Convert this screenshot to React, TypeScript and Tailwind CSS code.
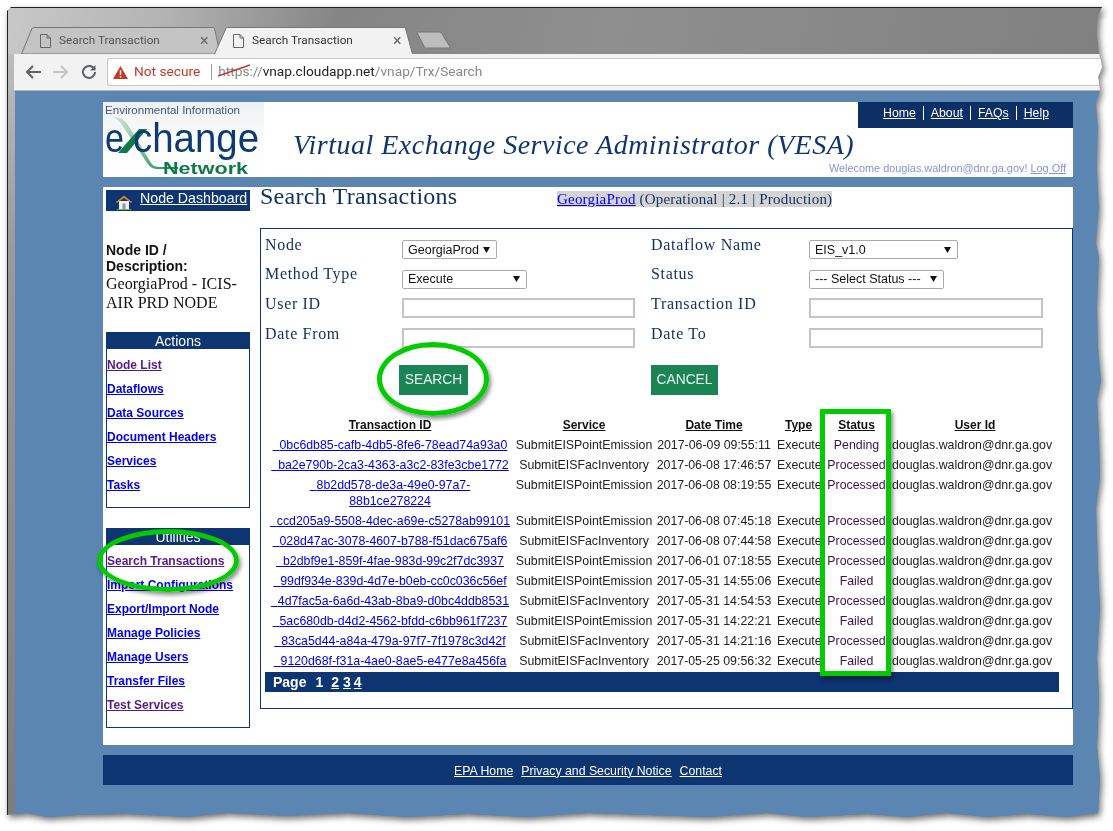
const serif = "font-['Liberation_Serif',serif]";
const sans = "font-['Liberation_Sans',Arial,sans-serif]";

type Row = { id: string[]; service: string; date: string; status: string };
const rows: Row[] = [
  { id: ["0bc6db85-cafb-4db5-8fe6-78ead74a93a0"], service: "SubmitEISPointEmission", date: "2017-06-09 09:55:11", status: "Pending" },
  { id: ["ba2e790b-2ca3-4363-a3c2-83fe3cbe1772"], service: "SubmitEISFacInventory", date: "2017-06-08 17:46:57", status: "Processed" },
  { id: ["8b2dd578-de3a-49e0-97a7-", "88b1ce278224"], service: "SubmitEISPointEmission", date: "2017-06-08 08:19:55", status: "Processed" },
  { id: ["ccd205a9-5508-4dec-a69e-c5278ab99101"], service: "SubmitEISPointEmission", date: "2017-06-08 07:45:18", status: "Processed" },
  { id: ["028d47ac-3078-4607-b788-f51dac675af6"], service: "SubmitEISFacInventory", date: "2017-06-08 07:44:58", status: "Processed" },
  { id: ["b2dbf9e1-859f-4fae-983d-99c2f7dc3937"], service: "SubmitEISPointEmission", date: "2017-06-01 07:18:55", status: "Processed" },
  { id: ["99df934e-839d-4d7e-b0eb-cc0c036c56ef"], service: "SubmitEISPointEmission", date: "2017-05-31 14:55:06", status: "Failed" },
  { id: ["4d7fac5a-6a6d-43ab-8ba9-d0bc4ddb8531"], service: "SubmitEISFacInventory", date: "2017-05-31 14:54:53", status: "Processed" },
  { id: ["5ac680db-d4d2-4562-bfdd-c6bb961f7237"], service: "SubmitEISPointEmission", date: "2017-05-31 14:22:21", status: "Failed" },
  { id: ["83ca5d44-a84a-479a-97f7-7f1978c3d42f"], service: "SubmitEISFacInventory", date: "2017-05-31 14:21:16", status: "Processed" },
  { id: ["9120d68f-f31a-4ae0-8ae5-e477e8a456fa"], service: "SubmitEISFacInventory", date: "2017-05-25 09:56:32", status: "Failed" },
];

function DocIcon() {
  return (
    <svg width="11" height="14" viewBox="0 0 11 14" fill="none" stroke="#666" strokeWidth="1">
      <path d="M.5.5h6.500l3.500 3.500v9.500h-10zM7 .5v3.500h3.500" />
    </svg>
  );
}

function Tab({ active, shape }: { active?: boolean; shape: string }) {
  return (
    <div className={`relative flex h-[27px] w-[199px] shrink-0 items-center pl-[19px] font-['Roboto',sans-serif] text-[11.800px] ${active ? "z-10 -ml-[6px] text-[#333]" : "text-[#555]"}`}>
      <svg className="absolute inset-0" width="199" height="27" viewBox="0 0 199 27">
        <path d={shape} fill={active ? "#f2f2f2" : "#c4c4c4"} stroke="#777" />
      </svg>
      <span className="relative flex items-center gap-[8px]">
        <DocIcon />
        <span className="w-[133px]">Search Transaction</span>
        <span className="text-[16px] leading-none text-[#666]">×</span>
      </span>
    </div>
  );
}

function Select({ w, label }: { w: string; label: string }) {
  return (
    <div className={`mt-[10px] flex h-[19px] items-center justify-between rounded-[2px] border border-[#aaa] bg-white pl-[5px] pr-[6px] ${sans} text-[12.500px] text-[#111] ${w}`}>
      <span className="pt-[1px]">{label}</span>
      <svg width="7" height="6" viewBox="0 0 7 6"><path d="M0 0h7L3.500 6z" fill="#111" /></svg>
    </div>
  );
}

function Field({ w }: { w: string }) {
  return <div className={`mt-[8px] h-[20px] border-2 border-[#c4c4c4] bg-white ${w}`} />;
}

function Label({ w, text }: { w: string; text: string }) {
  return <div className={`${w} shrink-0 ${serif} text-[16px] leading-[18px] tracking-[0.68px] text-[#10305f]`}>{text}</div>;
}

function SideLink({ text, visited }: { text: string; visited?: boolean }) {
  return (
    <div className="flex h-[24px] items-center">
      <a className={`text-[12px] font-bold underline ${visited ? "text-[#551a8b]" : "text-[#0000ee]"}`}>{text}</a>
    </div>
  );
}

function SideBox({ title, links }: { title: string; links: [string, boolean?][] }) {
  return (
    <div className="w-[144px]">
      <div className="h-[17px] bg-[#0d3572] text-center text-[14px] leading-[18px] text-white">{title}</div>
      <div className="border border-t-0 border-[#0d3572] pb-[10px] pt-[4px]">
        {links.map(([t, v]) => <SideLink key={t} text={t} visited={v} />)}
      </div>
    </div>
  );
}

function Logo() {
  const f = "Liberation Sans, Arial, sans-serif";
  return (
    <svg width="161" height="75" viewBox="0 0 161 75" className="shrink-0 overflow-visible">
      <defs>
        <linearGradient id="lg" x1="0" y1="0" x2="0" y2="1">
          <stop offset="0" stopColor="#eef1f4" />
          <stop offset="0.5" stopColor="#fafbfb" />
          <stop offset="1" stopColor="#ffffff" />
        </linearGradient>
        <linearGradient id="sw" x1="0" y1="0" x2="1" y2="1">
          <stop offset="0" stopColor="#cfe5d8" />
          <stop offset="0.55" stopColor="#7dbb98" />
          <stop offset="1" stopColor="#1f8a58" />
        </linearGradient>
      </defs>
      <rect width="161" height="75" fill="url(#lg)" />
      <text x="2" y="12" fontFamily={f} fontSize="11.500" fill="#3f5878" textLength="135" lengthAdjust="spacingAndGlyphs">Environmental Information</text>
      <path d="M10 15c6 0 11 2 15 8l23 38c2 3 5 4 9 4h18v2H55c-5 0-8-2-11-6L21 26c-3-5-6-9-11-11z" fill="url(#sw)" />
      <text x="2" y="50" fontFamily={f} fontSize="41" fill="#0e3a72" textLength="19" lengthAdjust="spacingAndGlyphs">e</text>
      <path d="M15 51L36 27h8L24 51z" fill="#0f7a48" />
      <text x="30" y="50" fontFamily={f} fontSize="41" fill="#0e3a72" textLength="126" lengthAdjust="spacingAndGlyphs">change</text>
      <text x="60" y="72" fontFamily={f} fontSize="17" fontWeight="700" fill="#0f7a48" textLength="85" lengthAdjust="spacingAndGlyphs">Network</text>
    </svg>
  );
}

function House() {
  return (
    <svg width="16" height="15" viewBox="0 0 16 15">
      <path d="M0 15c2-2 14-2 16 0z" fill="#7db342" />
      <path d="M3 6h10v8H3z" fill="#f3efe6" />
      <path d="M6.500 8.500h3V14h-3z" fill="#8a9aa8" />
      <path d="M8 0.500L16 7l-1 1-7-5-7 5-1-1z" fill="#d9822b" />
    </svg>
  );
}

export default function App() {
  return (
    <div className={`relative h-[831px] w-[1113px] overflow-hidden bg-white pl-[7px] pt-[7px] ${sans}`}>
      <div className="drop-shadow-[2px_3px_3px_rgba(0,0,0,0.55)]">
        <div className="h-[813px] w-[1096px] border-l border-t border-[#222] bg-[linear-gradient(180deg,#c4c4c4_0%,#9a9a9a_30%,#7c7c7c_100%)] [clip-path:polygon(0_4px,4px_0,1095px_0,1091px_10px,1090px_26px,1092px_46px,1095px_60px,1091px_70px,1093px_84px,1089px_96px,1091px_120px,1090px_160px,1092px_200px,1089px_236px,1092px_250px,1090px_300px,1091px_340px,1094px_374px,1090px_392px,1092px_430px,1093px_470px,1089px_500px,1091px_560px,1093px_600px,1090px_650px,1092px_690px,1090px_740px,1093px_770px,1091px_806px,1060px_810px,1020px_807px,980px_810px,940px_806px,900px_810px,860px_807px,800px_810px,760px_806px,700px_810px,640px_808px,580px_806px,520px_810px,460px_807px,400px_810px,340px_806px,280px_809px,220px_806px,180px_810px,120px_807px,70px_808px,40px_810px,20px_806px,0_808px)]">
          {/* title bar */}
          <div className="flex h-[46px] items-end bg-[linear-gradient(100deg,#c8c8c8_0%,#b4b4b4_14%,#858585_30%,#8f8f8f_55%,#808080_100%)] pl-[13px]">
            <Tab shape="M.5 27L11 1.500Q11.500.5 13 .5H192q1 0 1.500 1L199 27z" />
            <Tab active shape="M.5 27L12 1.500Q12.500.5 14 .5H190q1 0 1.500 1L198.500 27" />
            <svg width="36" height="18" viewBox="0 0 36 18" className="mb-[5px] ml-[3px] shrink-0">
              <path d="M1 1.500Q1 1 2 1H24q1 0 1.500 1L34 16q0 1-1 1H10q-1 0-1.500-1z" fill="#bdbdbd" stroke="#777" />
            </svg>
          </div>
          {/* address row */}
          <div className="ml-[6px] flex h-[37px] items-center border-b border-[#b5b5b5] bg-[#f2f2f2] text-[#666]">
            <div className="flex w-[93px] shrink-0 items-center pl-[11px]">
              <svg width="16" height="14" viewBox="0 0 16 14" fill="none" stroke="#5f6368" strokeWidth="2"><path d="M16 7H2M8 1L2 7l6 6" /></svg>
              <svg className="ml-[12px]" width="16" height="14" viewBox="0 0 16 14" fill="none" stroke="#c4c4c4" strokeWidth="2"><path d="M0 7h14M8 1l6 6-6 6" /></svg>
              <svg className="ml-[12px]" width="16" height="16" viewBox="0 0 16 16" fill="none" stroke="#5f6368" strokeWidth="2"><path d="M13.500 5.500A6 6 0 1 0 14 8" /><path d="M14.500 1v5.500H9" fill="#5f6368" strokeWidth="0" /></svg>
            </div>
            <div className="flex h-[28px] flex-1 items-center rounded-l-[3px] border-y border-l border-[#c8c8c8] bg-white pl-[5px] font-['Roboto',sans-serif] text-[13.700px] leading-none">
              <svg width="15" height="13" viewBox="0 0 15 13"><path d="M7.500 0L15 13H0z" fill="#c53929" /><path d="M6.800 4h1.400v5H6.800zM6.800 10h1.400v1.500H6.800z" fill="#fff" /></svg>
              <span className="ml-[6px] text-[#c53929]">Not secure</span>
              <span className="ml-[11px] h-[16px] w-px bg-[#999]" />
              <span className="relative ml-[6px] text-[#888]">
                https
                <svg className="absolute left-0 top-[-2px]" width="33" height="16" viewBox="0 0 33 16"><path d="M0 13L32 2" stroke="#c53929" strokeWidth="1.500" /></svg>
              </span>
              <span className="text-[#888]">://</span>
              <span className="text-[#222]">vnap.cloudapp.net</span>
              <span className="text-[#888]">/vnap/Trx/Search</span>
            </div>
          </div>
          {/* page */}
          <div className="ml-[7px] h-[729px] bg-[#5b86b2] pl-[88px] pt-[11px]">
            <div className="w-[970px]">
              {/* header */}
              <div className="flex h-[75px] bg-white">
                <Logo />
                <div className="flex flex-1 flex-col">
                  <div className="flex justify-end">
                    <div className="flex h-[26px] w-[215px] items-center bg-[#0c2f66] pb-[4px] pl-[25px] text-[12.300px] text-white">
                      <a className="underline">Home</a>
                      <span className="mx-[7px] h-[14px] w-px bg-white" />
                      <a className="underline">About</a>
                      <span className="mx-[7px] h-[14px] w-px bg-white" />
                      <a className="underline">FAQs</a>
                      <span className="mx-[7px] h-[14px] w-px bg-white" />
                      <a className="underline">Help</a>
                    </div>
                  </div>
                  <div className={`pl-[29px] ${serif} text-[28px] italic leading-[33px] tracking-[0.5px] text-[#0f3570]`}>Virtual Exchange Service Administrator (VESA)</div>
                  <div className="pr-[7px] text-right text-[10.900px] leading-[14px] text-[#8593d9]">Welecome douglas.waldron@dnr.ga.gov! <a className="underline">Log Off</a></div>
                </div>
              </div>
              {/* main */}
              <div className="mt-[10px] flex h-[558px] bg-white">
                <div className="w-[157px] shrink-0 pl-[3px] pt-[3px]">
                  <div className="flex h-[21px] w-[144px] items-center bg-[#0d3572] pl-[10px] text-[14.200px] text-white">
                    <span className="mt-[4px]"><House /></span>
                    <a className="mb-[3px] ml-[8px] underline">Node Dashboard</a>
                  </div>
                  <div className="mt-[31px] w-[144px]">
                    <div className="text-[14px] font-bold leading-[16px] text-[#111]">Node ID /<br />Description:</div>
                    <div className={`${serif} text-[16px] leading-[19px] tracking-[0.03px] text-[#111]`}>GeorgiaProd - ICIS-<br />AIR PRD NODE</div>
                  </div>
                  <div className="mt-[20px]">
                    <SideBox title="Actions" links={[["Node List", true], ["Dataflows"], ["Data Sources"], ["Document Headers"], ["Services"], ["Tasks"]]} />
                  </div>
                  <div className="mt-[20px]">
                    <SideBox title="Utilities" links={[["Search Transactions", true], ["Import Configurations"], ["Export/Import Node"], ["Manage Policies"], ["Manage Users"], ["Transfer Files"], ["Test Services", true]]} />
                  </div>
                </div>
                <div className="flex-1">
                  <div className="flex h-[41px] items-start">
                    <div className={`w-[297px] shrink-0 ${serif} text-[24px] leading-[18px] tracking-[0.25px] text-[#10305f]`}>Search Transactions</div>
                    <div className={`mt-[4px] flex h-[16px] items-center whitespace-nowrap bg-[#d4d4d4] ${serif} text-[15px] tracking-[0.2px] text-[#10305f]`}>
                      <a className="text-[#0000ee] underline">GeorgiaProd</a>&nbsp;(Operational | 2.1 | Production)
                    </div>
                  </div>
                  <div className="h-[481px] w-[813px] border border-[#0d3572] pl-[4px]">
                    <div className="flex h-[30px] items-center pt-[1px]">
                      <Label w="w-[137px]" text="Node" />
                      <div className="w-[249px]"><Select w="w-[95px]" label="GeorgiaProd" /></div>
                      <Label w="w-[158px]" text="Dataflow Name" />
                      <Select w="w-[149px]" label="EIS_v1.0" />
                    </div>
                    <div className="flex h-[30px] items-center">
                      <Label w="w-[137px]" text="Method Type" />
                      <div className="w-[249px]"><Select w="w-[125px]" label="Execute" /></div>
                      <Label w="w-[158px]" text="Status" />
                      <Select w="w-[135px]" label="--- Select Status ---" />
                    </div>
                    <div className="flex h-[30px] items-center">
                      <Label w="w-[137px]" text="User ID" />
                      <div className="w-[249px]"><Field w="w-[233px]" /></div>
                      <Label w="w-[158px]" text="Transaction ID" />
                      <Field w="w-[234px]" />
                    </div>
                    <div className="flex h-[30px] items-center">
                      <Label w="w-[137px]" text="Date From" />
                      <div className="w-[249px]"><Field w="w-[233px]" /></div>
                      <Label w="w-[158px]" text="Date To" />
                      <Field w="w-[234px]" />
                    </div>
                    <div className="mt-[16px] flex">
                      <div className="ml-[134px] flex h-[30px] w-[69px] items-center justify-center bg-[#1b8454] pt-[1px] text-[13.800px] text-[#eaf5ef]">SEARCH</div>
                      <div className="ml-[183px] flex h-[30px] w-[67px] items-center justify-center bg-[#1b8454] pt-[1px] text-[13.800px] text-[#eaf5ef]">CANCEL</div>
                    </div>
                    <table className="mt-[20px] w-[794px] table-fixed border-collapse text-[12.350px] leading-[16px] text-[#222]">
                      <colgroup>
                        <col className="w-[250px]" />
                        <col className="w-[138px]" />
                        <col className="w-[122px]" />
                        <col className="w-[47px]" />
                        <col className="w-[69px]" />
                        <col className="w-[168px]" />
                      </colgroup>
                      <thead>
                        <tr className="text-[12px] font-bold text-[#111] underline">
                          <td className="py-[2px] text-center">Transaction ID</td>
                          <td className="py-[2px] text-center">Service</td>
                          <td className="py-[2px] text-center">Date Time</td>
                          <td className="py-[2px] text-center">Type</td>
                          <td className="py-[2px] text-center">Status</td>
                          <td className="py-[2px] text-center">User Id</td>
                        </tr>
                      </thead>
                      <tbody>
                        {rows.map((r) => (
                          <tr key={r.id[0]} className="align-top">
                            <td className="whitespace-nowrap py-[2px] text-center">
                              <a className="text-[#0000ee] underline">&nbsp;&nbsp;{r.id[0]}{r.id[1] && <br />}{r.id[1]}</a>
                            </td>
                            <td className="whitespace-nowrap py-[2px] text-center">{r.service}</td>
                            <td className="whitespace-nowrap py-[2px] text-center">{r.date}</td>
                            <td className="whitespace-nowrap py-[2px] pl-[2px] text-left">Execute</td>
                            <td className="whitespace-nowrap py-[2px] text-center text-[#3b1050]">{r.status}</td>
                            <td className="whitespace-nowrap py-[2px] pl-[1px] text-left">douglas.waldron@dnr.ga.gov</td>
                          </tr>
                        ))}
                      </tbody>
                    </table>
                    <div className="mt-[1px] flex h-[20px] w-[794px] items-center bg-[#0d3572] pl-[8px] text-[14px] font-bold text-white">
                      <span>Page</span>
                      <span className="ml-[9px]">1</span>
                      <a className="ml-[8px] underline">2</a>
                      <a className="ml-[4px] underline">3</a>
                      <a className="ml-[3px] underline">4</a>
                    </div>
                  </div>
                </div>
              </div>
              {/* footer */}
              <div className="mt-[10px] flex h-[30px] items-center justify-center gap-[8px] bg-[#0d3572] pt-[2px] text-[12.300px] text-white">
                <a className="underline">EPA Home</a>
                <a className="underline">Privacy and Security Notice</a>
                <a className="underline">Contact</a>
              </div>
            </div>
          </div>
        </div>
      </div>
      {/* hand-drawn highlights lying over the page */}
      <div className="absolute left-[377px] top-[342px] h-[74px] w-[112px] rounded-[50%] border-[5px] border-[#0c0] shadow-[2px_3px_4px_rgba(0,0,0,0.45)]" />
      <div className="absolute left-[97px] top-[529px] h-[63px] w-[142px] rounded-[50%] border-[5px] border-[#0c0] shadow-[2px_3px_4px_rgba(0,0,0,0.45)]" />
      <div className="absolute left-[820px] top-[409px] h-[267px] w-[71px] border-[5px] border-[#0c0] shadow-[2px_3px_4px_rgba(0,0,0,0.45)]" />
    </div>
  );
}
